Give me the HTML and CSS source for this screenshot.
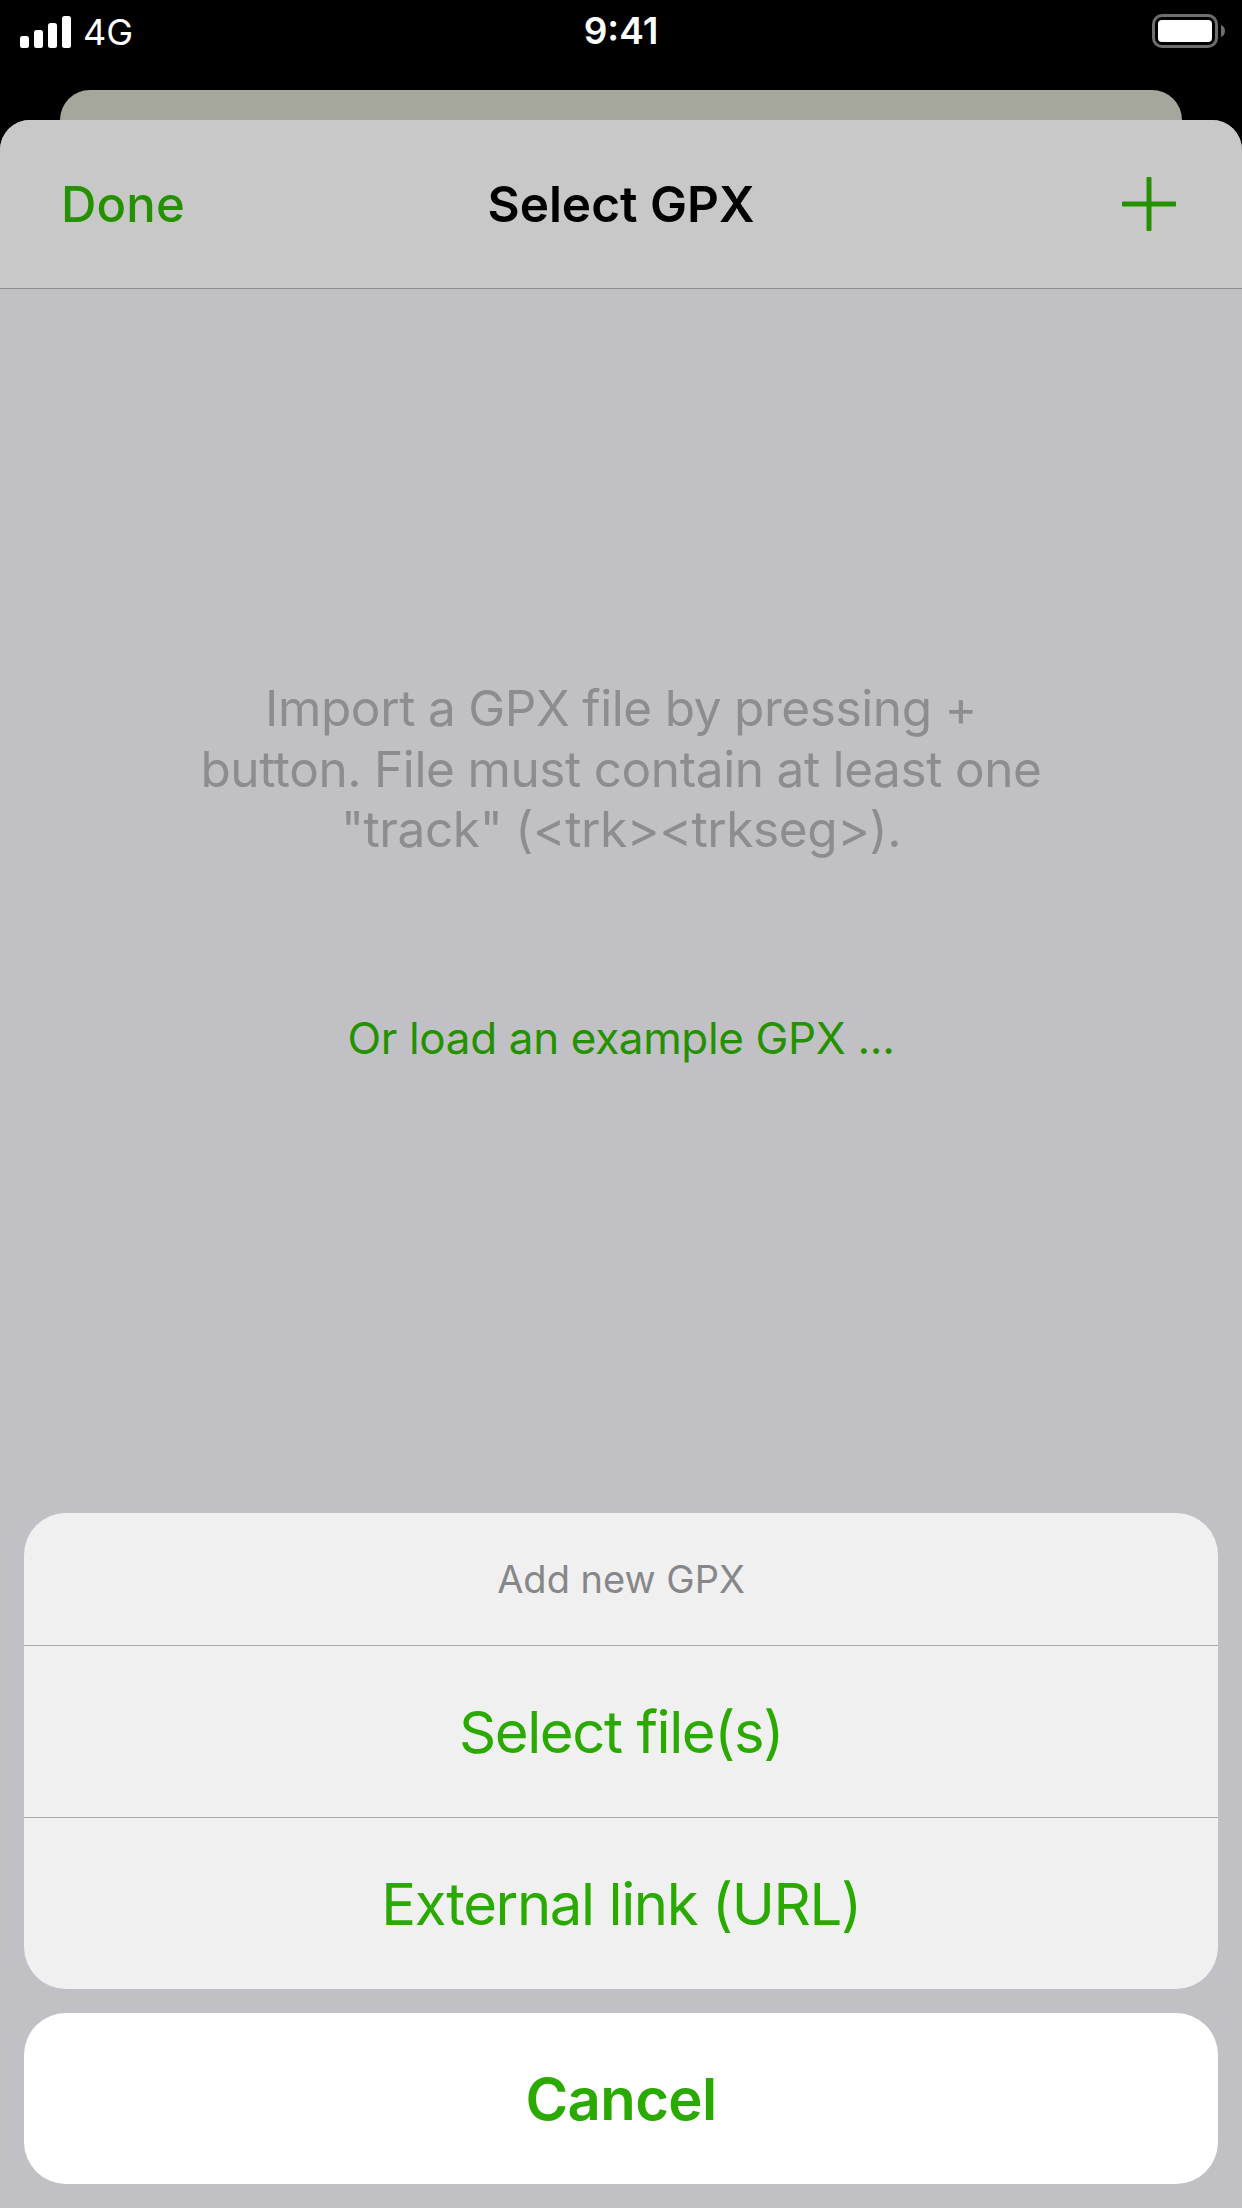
FILE: index.html
```html
<!DOCTYPE html>
<html lang="en">
<head>
<meta charset="utf-8">
<title>Select GPX</title>
<link rel="stylesheet" href="styles.css">
</head>
<body>
<div class="screen">
  <header class="status">
    <div class="status-left">
      <svg class="signal" width="52" height="32" viewBox="0 0 52 32" aria-hidden="true">
        <rect x="0" y="20" width="9" height="12" rx="2.5"/>
        <rect x="14" y="14" width="9" height="18" rx="2.5"/>
        <rect x="28" y="7" width="9" height="25" rx="2.5"/>
        <rect x="42" y="0" width="9" height="32" rx="2.5"/>
      </svg>
      <span class="network">4G</span>
    </div>
    <div class="clock">9:41</div>
    <svg class="battery" width="74" height="34" viewBox="0 0 74 34" aria-hidden="true">
      <rect x="1.500" y="1.500" width="63" height="31" rx="8.500" fill="none" stroke="#6e6e6e" stroke-width="3"/>
      <rect x="6" y="6" width="54" height="22" rx="4" fill="#fff"/>
      <path d="M69 11c2.500 1 4 3 4 6s-1.500 5-4 6z" fill="#6e6e6e"/>
    </svg>
  </header>
  <div class="back-card"></div>
  <main class="sheet">
    <nav class="navbar">
      <span class="done">Done</span>
      <span class="title">Select GPX</span>
      <svg class="plus" width="54" height="54" viewBox="0 0 54 54" aria-hidden="true">
        <path d="M27 1.500v51M1.500 27h51" stroke="#259100" stroke-width="5" stroke-linecap="round" fill="none"/>
      </svg>
    </nav>
    <section class="empty">
      <p class="hint">Import a GPX file by pressing +<br>button. File must contain at least one<br>"track" (&lt;trk&gt;&lt;trkseg&gt;).</p>
      <p class="example">Or load an example GPX ...</p>
    </section>
  </main>
  <aside class="actions">
    <div class="action-group">
      <div class="action-title">Add new GPX</div>
      <div class="action-item">Select file(s)</div>
      <div class="action-item">External link (URL)</div>
    </div>
    <div class="action-cancel">Cancel</div>
  </aside>
</div>
</body>
</html>
```
FILE: styles.css
```css
* { box-sizing: border-box; }
html, body { margin: 0; padding: 0; }
body { width: 1242px; height: 2208px; overflow: hidden; background: #000; font-family: "Inter", "Liberation Sans", sans-serif; }
.screen { position: relative; width: 1242px; height: 2208px; display: flex; flex-direction: column; }
.status { height: 90px; flex: none; position: relative; display: flex; align-items: flex-start; justify-content: space-between; padding: 14px 16px 0 20px; color: #fff; }
.status-left { display: flex; align-items: center; gap: 11px; }
.signal { fill: #fff; display: block; }
.network { font-size: 36px; line-height: 36px; font-weight: 400; }
.clock { position: absolute; left: 0; right: 0; top: 11px; text-align: center; font-size: 37px; line-height: 40px; font-weight: 600; }
.battery { display: block; margin-left: auto; }
.back-card { flex: none; height: 30px; margin: 0 60px; border-radius: 30px 30px 0 0; background: #a5a79c; }
.sheet { flex: 1; display: flex; flex-direction: column; background: #c1c0c5; border-radius: 30px 30px 0 0; overflow: hidden; }
.navbar { flex: none; height: 169px; display: flex; align-items: center; justify-content: space-between; padding: 0 66px 0 61px; background: #c8c8c8; border-bottom: 1px solid #8f8f91; position: relative; }
.done { font-size: 49px; font-weight: 500; letter-spacing: 0.2px; color: #259100; }
.title { position: absolute; left: 0; right: 0; text-align: center; font-size: 49.500px; font-weight: 600; color: #000; }
.plus { display: block; position: relative; }
.empty { flex: none; text-align: center; }
.hint { margin: 389px 0 0; font-size: 49.500px; line-height: 60.500px; letter-spacing: -0.4px; word-spacing: -0.6px; color: #8d8d90; }
.example { margin: 153px 0 0; font-size: 44px; line-height: 50px; letter-spacing: -0.35px; color: #259100; }
.actions { position: absolute; left: 24px; right: 24px; bottom: 24px; display: flex; flex-direction: column; gap: 24px; }
.action-group { background: #f0f0f1; border-radius: 42px; overflow: hidden; }
.action-title { height: 132px; display: flex; align-items: center; justify-content: center; font-size: 38px; color: #87878a; }
.action-item { height: 172px; display: flex; align-items: center; justify-content: center; border-top: 1px solid #a9a9ab; font-size: 58px; letter-spacing: -1.4px; color: #2aa900; }
.action-cancel { height: 171px; display: flex; align-items: center; justify-content: center; background: #fff; border-radius: 42px; font-size: 58px; font-weight: 600; letter-spacing: -0.6px; color: #2aa900; }
```
